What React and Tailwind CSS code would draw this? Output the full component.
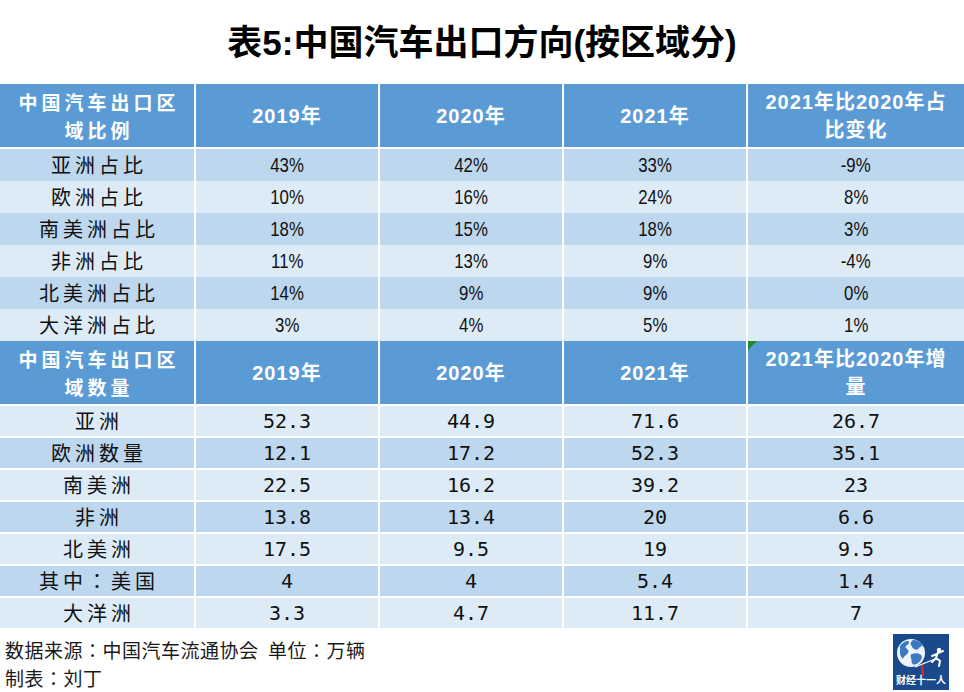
import React from 'react';

const cjk = { fontFamily: '"Noto Sans CJK SC", "Noto Sans", sans-serif' };
const jp = { fontFamily: '"Noto Sans CJK JP", "Noto Sans CJK SC", sans-serif' };
const narrow = { fontFamily: '"Liberation Sans", "Noto Sans CJK SC", sans-serif' };
const mono = { fontFamily: '"DejaVu Sans Mono", "Liberation Mono", monospace' };
const head = { fontFamily: '"Liberation Sans", "Noto Sans CJK SC", sans-serif' };

const cols = 'grid grid-cols-[194px_182px_182px_182px_216px] gap-x-[2px]';

const shareRows = [
  ['亚洲占比', '43%', '42%', '33%', '-9%'],
  ['欧洲占比', '10%', '16%', '24%', '8%'],
  ['南美洲占比', '18%', '15%', '18%', '3%'],
  ['非洲占比', '11%', '13%', '9%', '-4%'],
  ['北美洲占比', '14%', '9%', '9%', '0%'],
  ['大洋洲占比', '3%', '4%', '5%', '1%'],
];

const countRows = [
  ['亚洲', '52.3', '44.9', '71.6', '26.7'],
  ['欧洲数量', '12.1', '17.2', '52.3', '35.1'],
  ['南美洲', '22.5', '16.2', '39.2', '23'],
  ['非洲', '13.8', '13.4', '20', '6.6'],
  ['北美洲', '17.5', '9.5', '19', '9.5'],
  ['其中：美国', '4', '4', '5.4', '1.4'],
  ['大洋洲', '3.3', '4.7', '11.7', '7'],
];

function HeaderRow({ first, last, marker }) {
  return (
    <div className={`${cols} h-[63px]`}>
      <div className="bg-[#5b9bd5] flex flex-col items-center justify-center text-white font-bold text-[19px] leading-[28px] tracking-[4px] pl-[4px]" style={cjk}>
        <span>中国汽车出口区</span>
        <span>{first}</span>
      </div>
      {['2019年', '2020年', '2021年'].map((y) => (
        <div key={y} className="bg-[#5b9bd5] flex items-center justify-center text-white font-bold text-[20px] tracking-[1px]" style={head}>
          {y}
        </div>
      ))}
      <div className="relative bg-[#5b9bd5] flex flex-col items-center justify-center text-white font-bold text-[20px] leading-[28px] tracking-[1px]" style={head}>
        {marker && (
          <div className="absolute left-0 top-0 w-0 h-0 border-t-[9px] border-r-[9px] border-t-[#1e8a2e] border-r-transparent" />
        )}
        <span>2021年比2020年{last[0]}</span>
        <span>{last[1]}</span>
      </div>
    </div>
  );
}

function DataRow({ row, dark, font, squeeze }) {
  const bg = dark ? 'bg-[#bdd7ee]' : 'bg-[#ddebf7]';
  return (
    <div className={`${cols} h-[30px]`}>
      <div className={`${bg} flex items-center justify-center text-[20px] tracking-[4px] pl-[4px] text-[#111]`} style={jp}>
        {row[0]}
      </div>
      {row.slice(1).map((v, i) => (
        <div
          key={i}
          className={`${bg} flex items-center justify-center text-[#111] ${squeeze ? 'text-[21px]' : 'text-[20px]'}`}
          style={font}
        >
          <span className={squeeze ? 'inline-block scale-x-[0.8]' : ''}>{v}</span>
        </div>
      ))}
    </div>
  );
}

function Logo() {
  return (
    <div className="w-[56px] h-[56px] bg-[#1b4a8c] flex flex-col items-center overflow-hidden">
      <svg width="56" height="42" viewBox="0 0 56 42">
        <circle cx="18" cy="19" r="14" fill="#eef4fb" />
        <path d="M7 12c2-3 5-5 8-5 2 1 1 3-1 4s-2 3 0 4 2 3 0 5-3 2-4 5c-1-1-3-3-3-6s0-5 0-7z" fill="#3a78c2" />
        <path d="M20 6c4 0 8 2 10 5-1 2-3 1-4 3s-3 2-5 1-2-3-3-4 0-4 2-5z" fill="#3a78c2" />
        <path d="M19 20c3-1 7-1 9 1s0 6-3 8-5 2-6 0 0-3-1-5 0-4 1-4z" fill="#3a78c2" />
        <line x1="22" y1="33" x2="42" y2="25" stroke="#ffffff" strokeWidth="1.3" />
        <circle cx="46" cy="16" r="2.2" fill="#ffffff" />
        <path d="M45 18l-2 6M43 24l4 3-1 5M43 24l-4 4M44 20l-5 2M45 19l5-2" stroke="#ffffff" strokeWidth="2" fill="none" strokeLinecap="round" />
        <path d="M29 31l1 11" stroke="#d8282e" strokeWidth="2.2" />
      </svg>
      <span className="text-white font-bold text-[10px] leading-[10px] -mt-[1px]" style={cjk}>财经十一人</span>
    </div>
  );
}

export default function App() {
  return (
    <div className="w-[964px] h-[692px] bg-white overflow-hidden">
      <div className="h-[84px] flex items-center justify-center">
        <h1 className="text-[35px] font-bold text-black leading-none" style={head}>
          表5:中国汽车出口方向(按区域分)
        </h1>
      </div>
      <div className="flex flex-col gap-y-[2px]">
        <HeaderRow first="域比例" last={['占', '比变化']} />
        {shareRows.map((r, i) => (
          <DataRow key={r[0]} row={r} dark={i % 2 === 0} font={narrow} squeeze />
        ))}
        <HeaderRow first="域数量" last={['增', '量']} marker />
        {countRows.map((r, i) => (
          <DataRow key={r[0]} row={r} dark={i % 2 === 1} font={mono} />
        ))}
      </div>
      <div className="flex justify-between">
        <div className="pl-[5px] pt-[8px] text-[19px] leading-[28px] text-[#1a1a1a] tracking-[0.5px]" style={jp}>
          <div>数据来源：中国汽车流通协会&nbsp;&nbsp;单位：万辆</div>
          <div>制表：刘丁</div>
        </div>
        <div className="mt-[6px] mr-[15px]">
          <Logo />
        </div>
      </div>
    </div>
  );
}
